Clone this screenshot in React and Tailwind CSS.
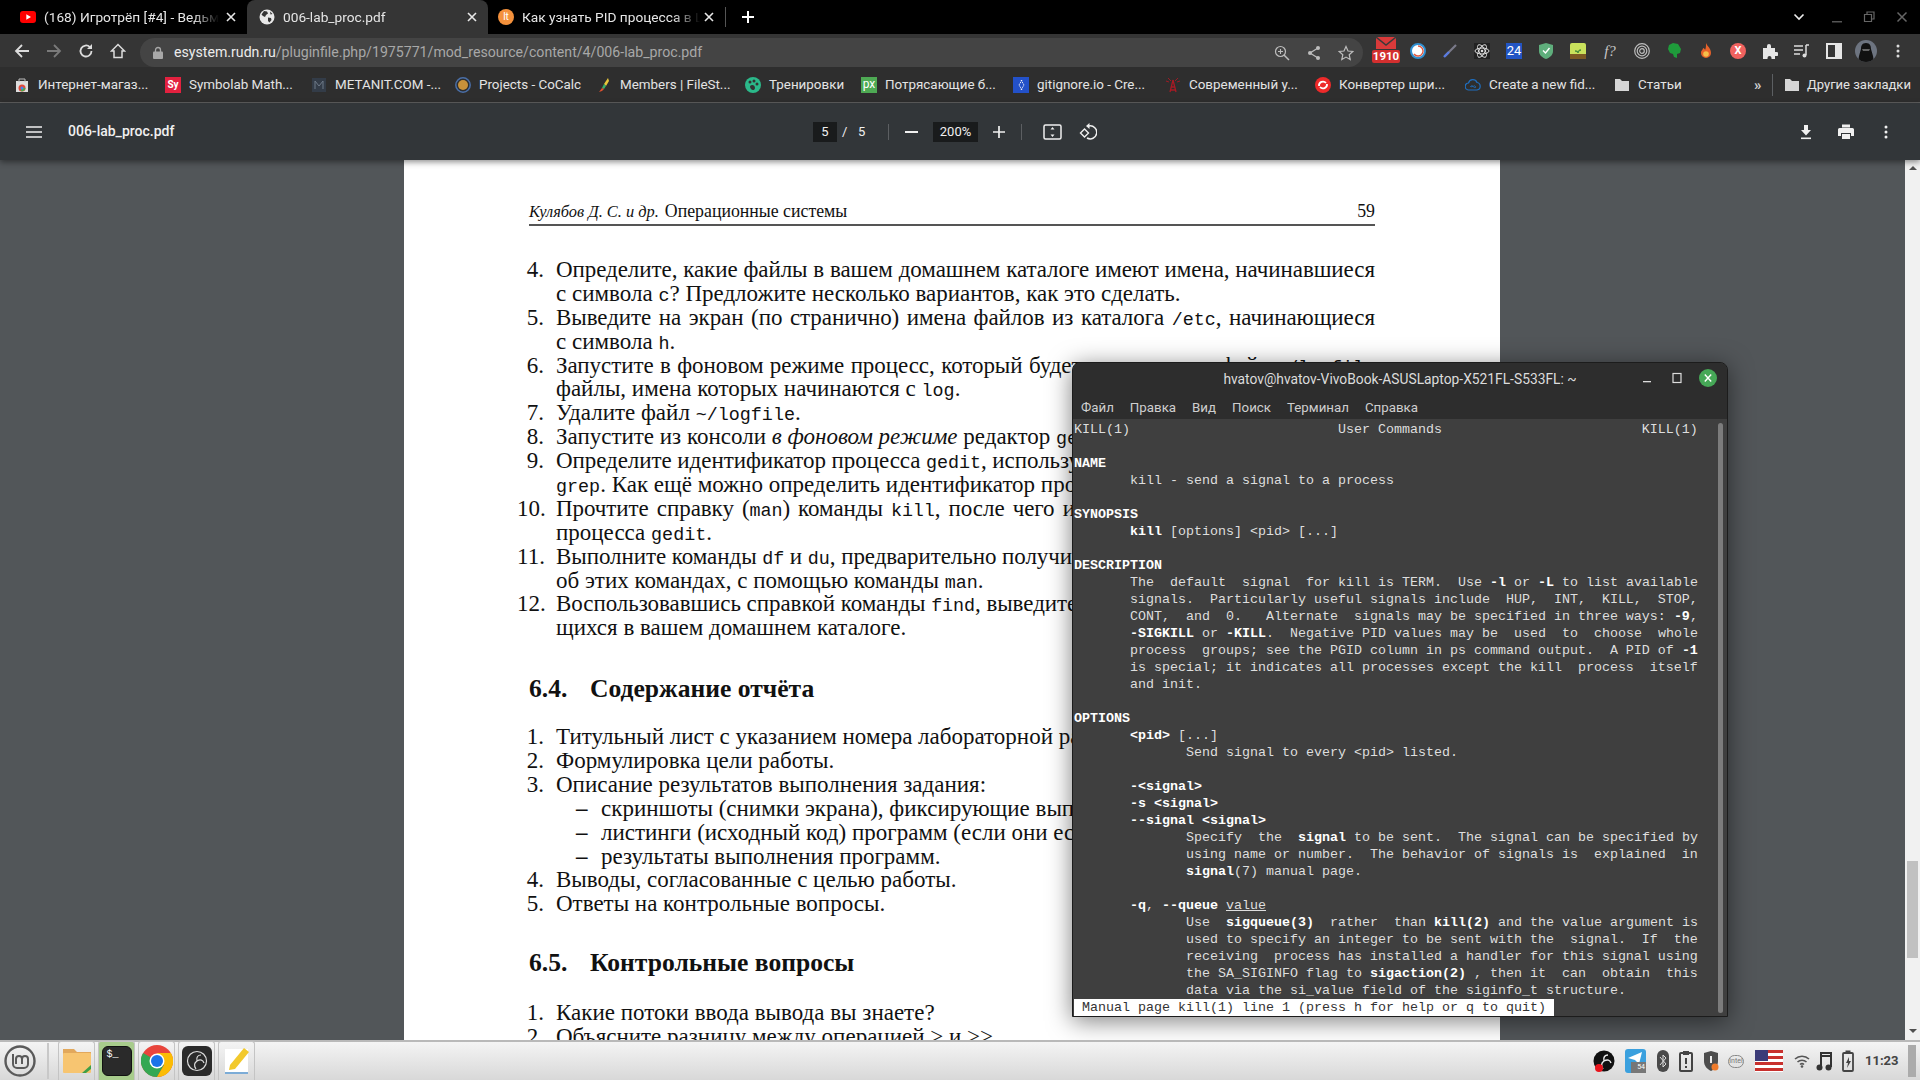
import React from "react";

const ui = "font-['Roboto','Liberation_Sans',sans-serif]";
const serif = "font-['Liberation_Serif','Noto_Serif',serif]";

const M = ({ children }) => <span className="font-['Liberation_Mono',monospace] text-[18.4px]">{children}</span>;

function Row({ n, children, just }) {
  return (
    <div className="flex h-[23.9px] leading-[23.9px] whitespace-nowrap">
      <div className="w-[27px] shrink-0 text-right">{n}</div>
      <div className={"ml-[12px] w-[819px] " + (just ? "[text-align-last:justify] tracking-[-0.06px]" : "")}>{children}</div>
    </div>
  );
}
function Sub({ children }) {
  return (
    <div className="flex h-[23.9px] leading-[23.9px] whitespace-nowrap">
      <div className="ml-[59px] w-[25px] shrink-0 font-bold">–</div>
      <div>{children}</div>
    </div>
  );
}
function H({ n, t, cls }) {
  return (
    <div className={"flex pl-[12px] h-[28px] leading-[28px] text-[25.6px] font-bold " + cls}>
      <div className="w-[61px]">{n}</div>
      <div>{t}</div>
    </div>
  );
}

function PdfPage() {
  return (
    <div className={"w-[1096px] mr-[1px] h-[900px] bg-white text-[#111] pl-[113px] pt-[40px] text-[23px] shrink-0 " + serif}>
      <div className="ml-[12px] w-[846px] h-[26px] border-b-2 border-[#555] flex justify-between text-[17.8px] leading-[22px]">
        <div><i className="text-[16.4px]">Кулябов Д. С. и др.</i><span className="ml-[6px]">Операционные системы</span></div>
        <div>59</div>
      </div>
      <div className="mt-[32px]">
        <Row n="4." just>Определите, какие файлы в вашем домашнем каталоге имеют имена, начинавшиеся</Row>
        <Row n="">с символа <M>c</M>? Предложите несколько вариантов, как это сделать.</Row>
        <Row n="5." just>Выведите на экран (по странично) имена файлов из каталога <M>/etc</M>, начинающиеся</Row>
        <Row n="">с символа <M>h</M>.</Row>
        <Row n="6." just>Запустите в фоновом режиме процесс, который будет записывать в файл <M>~/logfile</M></Row>
        <Row n="">файлы, имена которых начинаются с <M>log</M>.</Row>
        <Row n="7.">Удалите файл <M>~/logfile</M>.</Row>
        <Row n="8.">Запустите из консоли <i>в фоновом режиме</i> редактор <M>gedit</M>.</Row>
        <Row n="9." just>Определите идентификатор процесса <M>gedit</M>, используя команду <M>ps</M>, конвейер и фильтр</Row>
        <Row n=""><M>grep</M>. Как ещё можно определить идентификатор процесса?</Row>
        <Row n="10." just>Прочтите справку (<M>man</M>) команды <M>kill</M>, после чего используйте её для завершения</Row>
        <Row n="">процесса <M>gedit</M>.</Row>
        <Row n="11." just>Выполните команды <M>df</M> и <M>du</M>, предварительно получив более подробную информацию</Row>
        <Row n="">об этих командах, с помощью команды <M>man</M>.</Row>
        <Row n="12." just>Воспользовавшись справкой команды <M>find</M>, выведите имена всех директорий, имею-</Row>
        <Row n="">щихся в вашем домашнем каталоге.</Row>
      </div>
      <H n="6.4." t="Содержание отчёта" cls="mt-[34.3px]" />
      <div className="mt-[22.5px]">
        <Row n="1.">Титульный лист с указанием номера лабораторной работы и фамилии студента.</Row>
        <Row n="2.">Формулировка цели работы.</Row>
        <Row n="3.">Описание результатов выполнения задания:</Row>
        <Sub>скриншоты (снимки экрана), фиксирующие выполнение лабораторной работы;</Sub>
        <Sub>листинги (исходный код) программ (если они есть);</Sub>
        <Sub>результаты выполнения программ.</Sub>
        <Row n="4.">Выводы, согласованные с целью работы.</Row>
        <Row n="5.">Ответы на контрольные вопросы.</Row>
      </div>
      <H n="6.5." t="Контрольные вопросы" cls="mt-[33px]" />
      <div className="mt-[23.7px]">
        <Row n="1.">Какие потоки ввода вывода вы знаете?</Row>
        <Row n="2.">Объясните разницу между операцией &gt; и &gt;&gt;.</Row>
      </div>
    </div>
  );
}

const manLines = [
  "KILL(1)                          User Commands                         KILL(1)",
  "",
  "**NAME**",
  "       kill - send a signal to a process",
  "",
  "**SYNOPSIS**",
  "       **kill** [options] <pid> [...]",
  "",
  "**DESCRIPTION**",
  "       The  default  signal  for kill is TERM.  Use **-l** or **-L** to list available",
  "       signals.  Particularly useful signals include  HUP,  INT,  KILL,  STOP,",
  "       CONT,  and  0.   Alternate  signals may be specified in three ways: **-9**,",
  "       **-SIGKILL** or **-KILL**.  Negative PID values may be  used  to  choose  whole",
  "       process  groups; see the PGID column in ps command output.  A PID of **-1**",
  "       is special; it indicates all processes except the kill  process  itself",
  "       and init.",
  "",
  "**OPTIONS**",
  "       **<pid>** [...]",
  "              Send signal to every <pid> listed.",
  "",
  "       **-<signal>**",
  "       **-s <signal>**",
  "       **--signal <signal>**",
  "              Specify  the  **signal** to be sent.  The signal can be specified by",
  "              using name or number.  The behavior of signals is  explained  in",
  "              **signal**(7) manual page.",
  "",
  "       **-q**, **--queue** ~~value~~",
  "              Use  **sigqueue(3)**  rather  than **kill(2)** and the value argument is",
  "              used to specify an integer to be sent with the  signal.  If  the",
  "              receiving  process has installed a handler for this signal using",
  "              the SA_SIGINFO flag to **sigaction(2)** , then it  can  obtain  this",
  "              data via the si_value field of the siginfo_t structure.",
];

function ManLine({ text }) {
  const parts = text.split(/(\*\*.*?\*\*|~~.*?~~)/g);
  return (
    <div className="h-[17px] leading-[17px] whitespace-pre">
      {parts.map((p, i) => {
        if (p.startsWith("**")) return <b key={i} className="text-white font-bold">{p.slice(2, -2)}</b>;
        if (p.startsWith("~~")) return <u key={i}>{p.slice(2, -2)}</u>;
        return <span key={i}>{p}</span>;
      })}
    </div>
  );
}

function Terminal() {
  return (
    <div className="absolute left-[1072px] top-[202px] w-[656px] h-[655px] flex flex-col rounded-t-lg border border-[#1c1c1c] bg-[#3f3f3f] overflow-hidden shadow-[0_4px_24px_rgba(0,0,0,0.5)]">
      <div className={"h-[33px] shrink-0 bg-[#2d2d2d] flex items-center relative justify-center text-[13.8px] text-[#dcdcdc] " + ui}>
        <div>hvatov@hvatov-VivoBook-ASUSLaptop-X521FL-S533FL: ~</div>
        <div className="absolute right-[10px] top-[6px] flex items-center gap-[14px]">
          <svg width="16" height="16" viewBox="0 0 16 16"><rect x="4" y="11" width="8" height="1.3" fill="#ddd" /></svg>
          <svg width="16" height="16" viewBox="0 0 16 16"><rect x="4" y="3.5" width="8" height="9" fill="none" stroke="#ddd" strokeWidth="1.2" /></svg>
          <svg width="18" height="18" viewBox="0 0 18 18"><circle cx="9" cy="9" r="9" fill="#46a857" /><path d="M5.8 5.5l6.4 7M12.2 5.5l-6.4 7" stroke="#fff" strokeWidth="1.4" /></svg>
        </div>
      </div>
      <div className={"h-[23px] mb-[1px] shrink-0 bg-[#2d2d2d] flex items-center pl-[8px] gap-[16px] text-[13.3px] text-[#cfcfcf] " + ui}>
        <span>Файл</span><span>Правка</span><span>Вид</span><span>Поиск</span><span>Терминал</span><span>Справка</span>
      </div>
      <div className="relative flex-1 pl-[1px] pt-[1px] text-[13.33px] text-[#dedede] font-['Liberation_Mono',monospace]">
        {manLines.map((l, i) => <ManLine key={i} text={l} />)}
        <div className="h-[17px] leading-[17px] whitespace-pre bg-white text-[#333] w-[480px]"> Manual page kill(1) line 1 (press h for help or q to quit)</div>
        <div className="absolute right-[4px] top-[3px] bottom-[3px] w-[5px] rounded-full bg-[#7c7c7c]" />
      </div>
    </div>
  );
}

/* ---------- small icons ---------- */
const S = ({ children, w = 16, h = 16, vb }) => <svg width={w} height={h} viewBox={vb || `0 0 ${w} ${h}`}>{children}</svg>;

const YT = () => <S><rect x="0" y="2" width="16" height="12" rx="3" fill="#f00" /><path d="M6.3 5.2v5.6L11 8z" fill="#fff" /></S>;
const Globe = () => (
  <S><circle cx="8" cy="8" r="7.5" fill="#e8e8e8" /><path d="M5 2l3 .5 1 2-2 1.5-1 2-2-1-1.5-1.5zM9 8.5l3 .5.5 2-2 2.500-1.500-1.500zM11 2.500l2.500 2.500-2 .5z" fill="#353535" /></S>
);
const Lt = () => <div className="w-[16px] h-[16px] rounded-full bg-[#f4913c] text-white text-[10px] leading-[16px] text-center font-['Roboto',sans-serif]">lt</div>;
const X = () => <svg width="10" height="10" viewBox="0 0 10 10"><path d="M1 1l8 8M9 1l-8 8" stroke="#e8e8e8" strokeWidth="1.6" /></svg>;

function Tab({ w, pl, active, icon, title, tw }) {
  return (
    <div className={"relative h-[34px] flex items-center shrink-0 " + w + " " + pl + " " + (active ? "bg-[#353535] rounded-t-lg" : "")}>
      <div className="w-[16px] h-[16px] shrink-0">{icon}</div>
      <div className={"ml-[8px] pt-[1px] overflow-hidden whitespace-nowrap text-[13.7px] text-[#e6e6e6] [mask-image:linear-gradient(to_right,black_85%,transparent)] " + tw}>{title}</div>
      <div className="absolute right-[11px] top-[12px]"><X /></div>
    </div>
  );
}

const Nav = ({ children }) => <div className="w-[32px] h-[32px] flex items-center justify-center shrink-0">{children}</div>;

const extIcons = [
  <div key="m" className="relative w-[28px] h-[28px] flex flex-col items-center">
    <svg width="20" height="12" viewBox="0 0 20 12"><rect width="20" height="12" fill="#d93a3a" /><path d="M0 0l10 8 10-8" fill="none" stroke="#3a3a3a" strokeWidth="1.4" /></svg>
    <div className="bg-[#d32f2f] rounded-[2px] w-[28px] h-[13px] mt-[1px] text-white text-[11.5px] leading-[13px] font-bold text-center font-['Roboto',sans-serif]">1910</div>
  </div>,
  <S key="c"><circle cx="8" cy="8" r="7" fill="#fff" stroke="#2f8fd0" strokeWidth="2" /><path d="M8 3a5 5 0 1 1-4 8" fill="none" stroke="#e0583e" strokeWidth="1.4" /></S>,
  <S key="d"><path d="M14 2L3 13" stroke="#7a7a8a" strokeWidth="2.2" /><path d="M7 9l-5 5" stroke="#5a7be0" strokeWidth="2.4" /></S>,
  <S key="a"><rect width="16" height="16" fill="#222" /><g fill="none" stroke="#ddd" strokeWidth="1"><ellipse cx="8" cy="8" rx="7" ry="3" /><ellipse cx="8" cy="8" rx="7" ry="3" transform="rotate(60 8 8)" /><ellipse cx="8" cy="8" rx="7" ry="3" transform="rotate(120 8 8)" /></g><circle cx="8" cy="8" r="1.3" fill="#ddd" /></S>,
  <div key="24" className="w-[16px] h-[16px] bg-[#2255c4] text-white text-[13px] leading-[16px] text-center font-['Roboto',sans-serif]">24</div>,
  <S key="s"><path d="M8 0l7 2v6c0 4-3 6.5-7 8-4-1.500-7-4-7-8V2z" fill="#5fae7c" /><path d="M5 7.500l2.500 2.500 4-5" fill="none" stroke="#fff" strokeWidth="1.400" /></S>,
  <S key="g"><rect width="16" height="16" rx="2" fill="#c9e25c" /><rect y="11" width="16" height="5" fill="#7c5a24" /><path d="M5 8c2 0 3 1 3 2 0-1 1-3 3-3" stroke="#4a8f3a" fill="none" strokeWidth="1.400" /></S>,
  <div key="f" className="text-[#c8c8c8] text-[15px] italic font-['Liberation_Serif',serif] leading-[16px]">f?</div>,
  <S key="t"><g fill="none" stroke="#bdbdbd" strokeWidth="1.200"><circle cx="8" cy="8" r="7.300" /><circle cx="8" cy="8" r="4.800" /><circle cx="8" cy="8" r="2.300" /></g></S>,
  <S key="e"><path d="M3 2l4-2 5 1 3 5-1 4-3 1v4l-3-1-1-3-3-1-2-4z" fill="#1f9b3b" /></S>,
  <S key="fi"><path d="M8 0c1 3 5 5 5 10a5 5 0 0 1-10 0c0-3 2-3 2-5 1 0 2 1 2 2 1-2 1-4 1-7z" fill="#e8622a" /><circle cx="8" cy="11" r="2.800" fill="#f6c04a" /></S>,
  <div key="x" className="w-[16px] h-[16px] rounded-full bg-[#f0625f] text-white text-[11px] leading-[16px] font-bold text-center font-['Roboto',sans-serif]">X</div>,
  <S key="p"><path d="M1 5h4V3a2 2 0 0 1 4 0v2h4v4h1.500a2 2 0 0 1 0 4H13v3H9.500v-1a2 2 0 0 0-4 0v1H1z" fill="#e6e6e6" /></S>,
  <S key="ml"><path d="M0 3h9M0 7h9M0 11h6" stroke="#ddd" strokeWidth="1.500" /><path d="M12 2v10" stroke="#ddd" strokeWidth="1.500" /><path d="M12 2h3" stroke="#ddd" strokeWidth="1.500" /><circle cx="10.500" cy="12.500" r="2" fill="#ddd" /></S>,
  <S key="sb"><rect x="1" y="1" width="14" height="14" fill="none" stroke="#e6e6e6" strokeWidth="2" /><rect x="9" y="1" width="6" height="14" fill="#e6e6e6" /></S>,
  <div key="av" className="w-[22px] h-[22px] rounded-full bg-[#6d7480] overflow-hidden flex items-end justify-center">
    <svg width="22" height="22" viewBox="0 0 22 22"><path d="M11 3c4 0 5 3 5 6l2 7 1 6H3l1-6 2-7c0-3 1-6 5-6z" fill="#111" /><path d="M7 9h8l-1 2H8z" fill="#666" /></svg>
  </div>,
  <S key="dots"><g fill="#dcdcdc"><circle cx="8" cy="3" r="1.500" /><circle cx="8" cy="8" r="1.500" /><circle cx="8" cy="13" r="1.500" /></g></S>,
];

const Folder = () => <S><path d="M1 2h5l2 2h7v10H1z" fill="#d6d6d6" /></S>;

const bookmarks = [
  { w: "w-[151px]", t: "Интернет-магаз...", i: <S><path d="M2 4h12v11H2z" fill="#ddd" /><path d="M5 5V2h6v3" stroke="#bbb" fill="none" /><circle cx="8" cy="11" r="3.500" fill="#e04a3a" /><path d="M8 11l3.500 0a3.500 3.500 0 0 1-5 3z" fill="#4aa84a" /><circle cx="8" cy="11" r="1.500" fill="#4285f4" /></S> },
  { w: "w-[146px]", t: "Symbolab Math...", i: <div className="w-[16px] h-[16px] bg-[#e3213f] text-white text-[10px] leading-[16px] font-bold text-center font-['Roboto',sans-serif]">Sy</div> },
  { w: "w-[144px]", t: "METANIT.COM -...", i: <S><rect x="1" y="1" width="14" height="14" fill="#333c48" /><path d="M4 12V4l4 5 4-5v8" stroke="#6f7a88" fill="none" /></S> },
  { w: "w-[141px]", t: "Projects - CoCalc", i: <S><circle cx="8" cy="8" r="7.200" fill="none" stroke="#4a6fa8" strokeWidth="1.500" /><circle cx="8" cy="8" r="5" fill="#c8913a" /></S> },
  { w: "w-[149px]", t: "Members | FileSt...", i: <S><path d="M12 1L8 7l2 2 3-5z" fill="#e8c63a" /><path d="M8 7l-2 4 2 1 2-3z" fill="#3ab06a" /><path d="M6 11l-3 4 3-1 2-2z" fill="#e0502f" /></S> },
  { w: "w-[116px]", t: "Тренировки", i: <S><circle cx="8" cy="8" r="8" fill="#2bb98a" /><g fill="#333"><circle cx="5" cy="5" r="1.500" /><circle cx="9" cy="4" r="1.500" /><circle cx="12" cy="7" r="1.500" /><path d="M5 9c2-2 5-1 5 2s-5 3-5-2z" /></g></S> },
  { w: "w-[152px]", t: "Потрясающие б...", i: <div className="w-[16px] h-[16px] bg-[#4eaa54] text-white text-[12px] leading-[15px] text-center font-['Roboto',sans-serif]">px</div> },
  { w: "w-[152px]", t: "gitignore.io - Cre...", i: <S><rect width="16" height="16" fill="#2351c9" /><path d="M9 3L6 8l3 5M8 3l3 5-3 5" stroke="#fff" strokeWidth="1" fill="none" strokeDasharray="1.500 1" /></S> },
  { w: "w-[150px]", t: "Современный у...", i: <S><path d="M8 3L5 15M8 3l3 12M6 10h4M5 13h6" stroke="#a81a24" strokeWidth="1.300" fill="none" /><path d="M3 1l3 3M13 1l-3 3M1 4l3 1M15 4l-3 1" stroke="#a81a24" strokeWidth=".9" /></S> },
  { w: "w-[150px]", t: "Конвертер шри...", i: <S><circle cx="8" cy="8" r="8" fill="#ee2a2a" /><path d="M4 9a4 4 0 0 1 7-3M12 7a4 4 0 0 1-7 3" stroke="#fff" strokeWidth="1.800" fill="none" /></S> },
  { w: "w-[149px]", t: "Create a new fid...", i: <S><path d="M4 13a3.500 3.500 0 0 1-.5-7 4.500 4.500 0 0 1 8.500-.5 3.800 3.800 0 0 1 0 7.500z" fill="none" stroke="#1f6fc0" strokeWidth="1.200" /><path d="M5.500 9.500c1-1.500 2 0 2.500 0s1.500-1.500 2.500 0-1.500 1.500-2.500 0-1.500 1.500-2.500 0z" fill="none" stroke="#1f6fc0" strokeWidth=".9" /></S> },
  { w: "w-[140px]", t: "Статьи", i: <Folder /> },
];

const Sep = ({ cls }) => <div className={"w-px h-[16px] bg-[#5c5f62] shrink-0 " + cls} />;

function Chrome() {
  return (
    <div className={"shrink-0 " + ui}>
      <div className="h-[34px] bg-black flex relative">
        <Tab w="w-[247px]" pl="pl-[20px]" icon={<YT />} title="(168) Игротрёп [#4] - Ведьмак 3" tw="w-[175px]" />
        <Tab w="w-[241px]" pl="pl-[12px]" active icon={<Globe />} title="006-lab_proc.pdf" tw="w-[180px]" />
        <Tab w="w-[237px]" pl="pl-[10px]" icon={<Lt />} title="Как узнать PID процесса в Linux" tw="w-[178px]" />
        <div className="w-px h-[20px] bg-[#555] mt-[7px] shrink-0" />
        <div className="ml-[15px] mt-[10px]"><svg width="14" height="14" viewBox="0 0 14 14"><path d="M7 1v12M1 7h12" stroke="#fff" strokeWidth="2" /></svg></div>
        <div className="ml-auto flex items-center pr-[12px]">
          <svg width="12" height="8" viewBox="0 0 12 8"><path d="M1.500 1.500L6 6l4.500-4.500" stroke="#eee" strokeWidth="1.600" fill="none" /></svg>
          <svg className="ml-[26px]" width="12" height="12" viewBox="0 0 12 12"><rect x="1" y="10" width="10" height="1.500" fill="#555" /></svg>
          <svg className="ml-[20px]" width="12" height="12" viewBox="0 0 12 12"><path d="M1.500 3.500h7v7h-7zM4 3V1h7v7H9" stroke="#666" strokeWidth="1.200" fill="none" /></svg>
          <svg className="ml-[21px]" width="12" height="12" viewBox="0 0 12 12"><path d="M1.500 1.500l9 9M10.500 1.500l-9 9" stroke="#666" strokeWidth="1.500" /></svg>
        </div>
      </div>

      <div className="h-[33px] bg-[#353535] flex items-center pl-[6px]">
        <Nav><svg width="16" height="16" viewBox="0 0 16 16"><path d="M15 8H2M8 2L2 8l6 6" stroke="#dcdcdc" strokeWidth="1.800" fill="none" /></svg></Nav>
        <Nav><svg width="16" height="16" viewBox="0 0 16 16"><path d="M1 8h13M8 2l6 6-6 6" stroke="#7a7a7a" strokeWidth="1.800" fill="none" /></svg></Nav>
        <Nav><svg width="16" height="16" viewBox="0 0 16 16"><path d="M13.500 8a5.500 5.500 0 1 1-1.600-3.900" stroke="#dcdcdc" strokeWidth="1.800" fill="none" /><path d="M14 1v5H9z" fill="#dcdcdc" /></svg></Nav>
        <Nav><svg width="16" height="16" viewBox="0 0 16 16"><path d="M8 1.500L1.500 8H4v6.500h8V8h2.500z" stroke="#dcdcdc" strokeWidth="1.500" fill="none" /></svg></Nav>
        <div className="ml-[6px] mt-[4px] w-[1223px] h-[29px] rounded-full bg-[#444] flex items-center pl-[13px] pr-[1px] shrink-0">
          <svg width="10" height="13" viewBox="0 0 10 13"><path d="M2.500 6V4a2.500 2.500 0 0 1 5 0v2" stroke="#a8a8a8" strokeWidth="1.300" fill="none" /><rect y="5.500" width="10" height="7.500" rx="1" fill="#a8a8a8" /></svg>
          <div className="ml-[11px] text-[14.15px] text-[#a8a8a8] whitespace-nowrap"><span className="text-[#ececec]">esystem.rudn.ru</span>/pluginfile.php/1975771/mod_resource/content/4/006-lab_proc.pdf</div>
          <div className="ml-auto flex items-center">
            <Nav><svg width="16" height="16" viewBox="0 0 16 16"><circle cx="6.500" cy="6.500" r="5" fill="none" stroke="#bdbdbd" strokeWidth="1.200" /><path d="M10 10l5 5" stroke="#bdbdbd" strokeWidth="1.500" /><path d="M6.500 4v5M4 6.500h5" stroke="#bdbdbd" strokeWidth="1.100" /></svg></Nav>
            <Nav><svg width="16" height="16" viewBox="0 0 16 16"><path d="M12 3L4 8l8 5" stroke="#bdbdbd" strokeWidth="1.300" fill="none" /><circle cx="12" cy="3" r="2" fill="#bdbdbd" /><circle cx="4" cy="8" r="2" fill="#bdbdbd" /><circle cx="12" cy="13" r="2" fill="#bdbdbd" /></svg></Nav>
            <Nav><svg width="16" height="16" viewBox="0 0 16 16"><path d="M8 1.500l2 4.500 4.800.5-3.600 3.200 1 4.800L8 12.100 3.800 14.500l1-4.800L1.200 6.500 6 6z" stroke="#bdbdbd" strokeWidth="1.200" fill="none" /></svg></Nav>
          </div>
        </div>
        <div className="ml-[7px] flex">
          {extIcons.map((ic, i) => <Nav key={i}>{ic}</Nav>)}
        </div>
      </div>

      <div className="h-[36px] bg-[#2e2e2e] border-b border-[#5f5f5f] flex items-center pl-[14px] pt-[1px] text-[13.4px] text-[#e4e4e4]">
        {bookmarks.map((b, i) => (
          <div key={i} className={"flex items-center shrink-0 " + b.w}>
            <div className="w-[16px] h-[16px] flex items-center justify-center shrink-0">{b.i}</div>
            <div className="ml-[8px] whitespace-nowrap">{b.t}</div>
          </div>
        ))}
        <div className="text-[#d0d0d0] text-[15px] font-bold w-[18px] shrink-0 leading-[15px]">»</div>
        <Sep cls="mr-[11px] !h-[22px]" />
        <Folder />
        <div className="ml-[7px] whitespace-nowrap text-[13px]">Другие закладки</div>
      </div>

      <div className="relative z-10 h-[57px] bg-[#323639] flex items-center text-[13px] text-[#f0f0f0] shadow-[0_2px_6px_rgba(0,0,0,0.45)]">
        <div className="ml-[26px] w-[16px] shrink-0"><svg width="16" height="12" viewBox="0 0 16 12"><path d="M0 1h16M0 6h16M0 11h16" stroke="#f0f0f0" strokeWidth="1.700" /></svg></div>
        <div className="ml-[26px] w-[745px] shrink-0 text-[14px] font-medium">006-lab_proc.pdf</div>
        <div className="w-[24px] h-[20px] bg-[#191b1c] text-center leading-[20px] shrink-0">5</div>
        <div className="ml-[5px] w-[16px] shrink-0">/</div>
        <div className="w-[30px] shrink-0">5</div>
        <Sep cls="" />
        <div className="ml-[16px] w-[13px] h-[2px] bg-[#f0f0f0] shrink-0" />
        <div className="ml-[15px] w-[45px] h-[20px] bg-[#191b1c] text-center leading-[20px] shrink-0">200%</div>
        <div className="ml-[15px] shrink-0"><svg width="12" height="12" viewBox="0 0 12 12"><path d="M6 0v12M0 6h12" stroke="#f0f0f0" strokeWidth="1.700" /></svg></div>
        <div className="ml-[16px]"><Sep /></div>
        <div className="ml-[21px] shrink-0"><svg width="19" height="16" viewBox="0 0 19 16"><rect x="1" y="1" width="17" height="14" rx="1.500" stroke="#f0f0f0" strokeWidth="1.500" fill="none" /><path d="M9.500 3l2 2.500h-4zM9.500 13l2-2.500h-4z" fill="#f0f0f0" /></svg></div>
        <div className="ml-[17px] shrink-0"><svg width="18" height="18" viewBox="0 0 18 18"><path d="M10 3a6.500 6.500 0 1 1-2 12" stroke="#f0f0f0" strokeWidth="1.500" fill="none" /><path d="M10.500 0v6L7 3z" fill="#f0f0f0" /><path d="M5.500 6L1.500 10l4 4 4-4z" stroke="#f0f0f0" strokeWidth="1.400" fill="none" /></svg></div>
        <div className="ml-auto flex items-center gap-[24px] pr-[26px]">
          <svg width="16" height="16" viewBox="0 0 16 16"><path d="M6 1h4v5h3l-5 5.500L3 6h3z" fill="#f0f0f0" /><rect x="3" y="13.500" width="10" height="1.600" fill="#f0f0f0" /></svg>
          <svg width="16" height="16" viewBox="0 0 16 16"><rect x="4" y="0.500" width="8" height="3" fill="#f0f0f0" /><path d="M0 5.500a1.500 1.500 0 0 1 1.500-1.500h13a1.500 1.500 0 0 1 1.500 1.500V12h-3V9H3v3H0z" fill="#f0f0f0" /><rect x="4" y="10" width="8" height="5" fill="#f0f0f0" /></svg>
          <svg width="16" height="16" viewBox="0 0 16 16"><g fill="#f0f0f0"><circle cx="8" cy="3" r="1.500" /><circle cx="8" cy="8" r="1.500" /><circle cx="8" cy="13" r="1.500" /></g></svg>
        </div>
      </div>
    </div>
  );
}

const tile = "w-[37px] h-[39px] rounded-t-[3px] border border-b-0 border-[#c4c4c4] flex items-center justify-center shrink-0";

function Taskbar() {
  return (
    <div className={"relative z-20 h-[40px] shrink-0 border-t-2 border-[#b9b9b9] bg-gradient-to-b from-[#f4f4f4] to-[#d8d8d8] flex items-center " + ui}>
      <div className="ml-[4px] shrink-0">
        <svg width="32" height="32" viewBox="0 0 32 32"><circle cx="16" cy="16" r="14.500" fill="none" stroke="#5a5a5a" strokeWidth="2.400" /><path d="M9 9v10a4 4 0 0 0 4 4h7a4 4 0 0 0 4-4v-5a3 3 0 0 0-6 0v5M18 14a3 3 0 0 0-6 0v5" fill="none" stroke="#5a5a5a" strokeWidth="2" /></svg>
      </div>
      <div className="ml-[11px] w-[2px] h-[36px] bg-[#c8c8c8] shrink-0" />
      <div className="ml-[9px] flex gap-[3px] self-end">
        <div className={tile}>
          <svg width="30" height="28" viewBox="0 0 30 28"><path d="M1 2h11l3 3h14v3H1z" fill="#e2a85c" /><rect x="1" y="6" width="28" height="20" rx="1" fill="#f7c571" /><path d="M29 18l-9 8h4l5-4z" fill="#3f9f47" /></svg>
        </div>
        <div className={tile + " bg-[#a8cc8c]"}>
          <div className="w-[30px] h-[30px] rounded-[6px] bg-[#2a2a2a] border border-[#111] text-white text-[10px] pl-[4px] font-['Liberation_Mono',monospace] leading-[16px]">$_</div>
        </div>
        <div className={tile}>
          <svg width="32" height="32" viewBox="0 0 32 32"><circle cx="16" cy="16" r="16" fill="#e8453c" /><path d="M16 16L2.100 8A16 16 0 0 0 16 32l8-14z" fill="#34a853" /><path d="M16 8h13.900A16 16 0 0 1 16 32l7-12z" fill="#fbbc05" /><circle cx="16" cy="16" r="7.500" fill="#fff" /><circle cx="16" cy="16" r="6" fill="#1a73e8" /></svg>
        </div>
        <div className={tile}>
          <div className="w-[30px] h-[30px] rounded-[6px] bg-[#2a2a2a] flex items-center justify-center">
            <svg width="22" height="22" viewBox="0 0 22 22"><circle cx="11" cy="11" r="9.500" fill="none" stroke="#ddd" strokeWidth="1.200" /><path d="M11 11c-1-4 1-6 4-6M11 11c3.500-2 6-1 7 2M11 11c-3 2-3 5-1 8" stroke="#ddd" strokeWidth="1.200" fill="none" /></svg>
          </div>
        </div>
        <div className={tile}>
          <svg width="26" height="28" viewBox="0 0 26 28"><rect x="1" y="2" width="23" height="23" fill="#fff" /><path d="M6 18L20 1l5 4-14 17-6 1z" fill="#f2c92c" /><path d="M1 26h23" stroke="#5b9bd5" strokeWidth="1.500" /></svg>
        </div>
      </div>
      <div className="ml-auto flex items-center shrink-0">
        <svg width="22" height="22" viewBox="0 0 22 22"><circle cx="11" cy="11" r="10.500" fill="#111" /><path d="M11 11c-1-4 1-6 4-6M11 11c3.500-2 6-1 7 2M11 11c-3 2-3 5-1 8" stroke="#eee" strokeWidth="1.400" fill="none" /><circle cx="6" cy="18" r="4" fill="#e8141c" /></svg>
        <div className="relative ml-[10px] w-[21px] h-[24px] rounded-[3px] bg-[#3aa0de]">
          <svg className="absolute left-[3px] top-[3px]" width="14" height="12" viewBox="0 0 14 12"><path d="M0 6L14 0l-3 12-4-4z" fill="#fff" /></svg>
          <div className="absolute right-0 bottom-0 w-[15px] h-[11px] bg-[#777] text-white text-[7px] leading-[11px] text-right pr-[1px]">54</div>
        </div>
        <div className="ml-[11px]"><svg width="12" height="22" viewBox="0 0 12 22"><rect width="12" height="22" rx="6" fill="#4a4a4a" /><path d="M3 7l6 7-3 3V5l3 3-6 7" stroke="#ddd" fill="none" strokeWidth="1" /></svg></div>
        <div className="ml-[10px]"><svg width="14" height="22" viewBox="0 0 14 22"><rect x="1" y="3" width="12" height="18" rx="1" fill="none" stroke="#444" strokeWidth="2" /><rect x="4" y="1" width="6" height="4" fill="#444" /><rect x="6" y="8" width="2" height="6" fill="#444" /><rect x="6" y="16" width="2" height="2" fill="#444" /></svg></div>
        <div className="ml-[10px]"><svg width="16" height="22" viewBox="0 0 16 22"><path d="M8 1l7 2v8c0 5-3 8-7 10-4-2-7-5-7-10V3z" fill="#4d4d4d" /><circle cx="12" cy="17" r="3.500" fill="#ee7b2c" /><rect x="7" y="6" width="2" height="7" fill="#eee" /></svg></div>
        <div className="ml-[9px] w-[16px] h-[13px] rounded-full border border-[#888] text-[#777] text-[7px] leading-[11px] text-center">intel</div>
        <div className="ml-[11px]"><svg width="28" height="22" viewBox="0 0 28 22"><rect width="28" height="22" fill="#fff" /><g fill="#c8312e"><rect width="28" height="3" /><rect y="6" width="28" height="3" /><rect y="12" width="28" height="3" /><rect y="18" width="28" height="3" /></g><rect width="13" height="11" fill="#3b3b78" /></svg></div>
        <div className="ml-[11px]"><svg width="16" height="14" viewBox="0 0 16 14"><path d="M1 5a10 10 0 0 1 14 0M3.500 8a6.500 6.500 0 0 1 9 0M6 10.500a3 3 0 0 1 4 0" stroke="#555" strokeWidth="1.500" fill="none" /><circle cx="8" cy="12.500" r="1.300" fill="#555" /></svg></div>
        <div className="ml-[6px]"><svg width="16" height="20" viewBox="0 0 16 20"><path d="M5 16V2h10v14M5 5h10" stroke="#333" strokeWidth="2" fill="none" /><circle cx="3.500" cy="16.500" r="3" fill="#333" /><circle cx="12.500" cy="16.500" r="3" fill="#333" /></svg></div>
        <div className="ml-[10px]"><svg width="12" height="22" viewBox="0 0 12 22"><rect x="1" y="3" width="10" height="18" rx="1" fill="none" stroke="#444" strokeWidth="1.800" /><rect x="3.500" y="0.500" width="5" height="3" fill="#444" /><path d="M7 7l-3 6h2l-1 5 4-7H7z" fill="#444" /></svg></div>
        <div className="ml-[11px] w-[36px] text-[13px] font-bold text-[#444]">11:23</div>
        <div className="ml-[7px] mr-[4px] w-[8px] h-[32px] bg-[#ababab]" />
      </div>
    </div>
  );
}

export default function App() {
  return (
    <div className="w-[1920px] h-[1080px] flex flex-col overflow-hidden bg-[#525659]">
      <Chrome />
      <div className="relative flex-1 flex overflow-hidden">
        <div className="flex-1 flex justify-center overflow-hidden bg-[#525659]">
          <PdfPage />
        </div>
        <div className="w-[15px] shrink-0 bg-[#f1f1f1] flex flex-col items-center">
          <div className="mt-[6px] w-0 h-0 border-x-[4px] border-x-transparent border-b-[4px] border-b-[#505050]" />
          <div className="mt-[691px] w-[11px] h-[97px] bg-[#c1c1c1]" />
          <div className="mt-[71px] w-0 h-0 border-x-[4px] border-x-transparent border-t-[4px] border-t-[#505050]" />
        </div>
        <Terminal />
      </div>
      <Taskbar />
    </div>
  );
}
